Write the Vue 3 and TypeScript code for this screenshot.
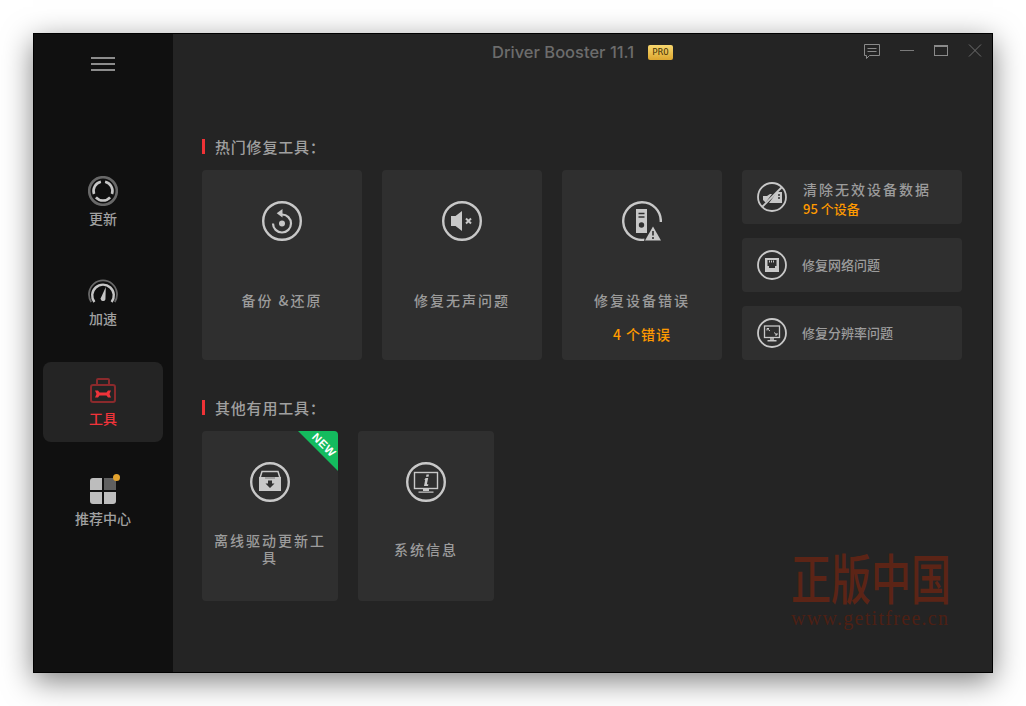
<script setup lang="ts">
const navItems = [
  { key: "update", label: "更新" },
  { key: "speed", label: "加速" },
  { key: "tools", label: "工具" },
  { key: "center", label: "推荐中心" },
]
</script>

<template>
  <div class="page">
    <div class="window">
      <aside class="side">
        <div class="burger"><i></i><i></i><i></i></div>
        <nav class="nav">
          <div v-for="item in navItems" :key="item.key" class="nav-item" :class="{ active: item.key === 'tools' }">
            <svg v-if="item.key === 'update'" class="nav-icon" viewBox="0 0 30 30" fill="none">
              <circle cx="15" cy="15" r="13.8" stroke="#686868" stroke-width="2.600" />
              <path d="M12.900 5.700A9.500 9.500 0 0 0 6 18M17.100 5.700A9.500 9.500 0 0 1 24 18M7.900 21.300A9.500 9.500 0 0 0 22.100 21.300" stroke="#c6c6c6" stroke-width="2.600" />
            </svg>
            <svg v-else-if="item.key === 'speed'" class="nav-icon" viewBox="0 0 30 30" fill="none">
              <path d="M3.200 26A14 14 0 1 1 26.800 26" stroke="#686868" stroke-width="1.800" />
              <path d="M6.400 26A10.800 10.800 0 1 1 23.600 26" stroke="#c6c6c6" stroke-width="2.400" />
              <path d="M17.800 11 17.400 23.500A2.500 2.500 0 0 1 12.600 22.500Z" fill="#c6c6c6" />
            </svg>
            <svg v-else-if="item.key === 'tools'" class="nav-icon" viewBox="0 0 30 30" fill="none">
              <path d="M9 8V4A1 1 0 0 1 10 3H20A1 1 0 0 1 21 4V8" stroke="#8a2a2c" stroke-width="2" />
              <rect x="3" y="9" width="24" height="17" rx="2" stroke="#8a2a2c" stroke-width="2" />
              <path d="M7 14.500H10L11.500 16.500H18.500L20 14.500H23L21.500 18 23 21.500H20L18.500 19.500H11.500L10 21.500H7L8.500 18Z" fill="#f0333a" />
            </svg>
            <svg v-else class="nav-icon" viewBox="0 0 30 30">
              <path d="M5 2H14V14H2V5A3 3 0 0 1 5 2Z" fill="#bdbdbd" />
              <path d="M16 2H25A3 3 0 0 1 28 5V14H16Z" fill="#606060" />
              <path d="M2 16H14V28H5A3 3 0 0 1 2 25Z" fill="#bdbdbd" />
              <path d="M16 16H28V25A3 3 0 0 1 25 28H16Z" fill="#bdbdbd" />
            </svg>
            <span v-if="item.key === 'center'" class="dot"></span>
            <span class="nav-label">{{ item.label }}</span>
          </div>
        </nav>
      </aside>

      <main class="main">
        <header class="titlebar">
          <div class="brand">
            <span class="brand-name">Driver Booster 11.1</span>
            <span class="pro">PRO</span>
          </div>
          <div class="controls">
            <svg width="18" height="18" viewBox="0 0 18 18" fill="none" stroke="#8a8a8a">
              <path d="M1.500 1.500H16.500V12.500H6.500L3.500 15.500V12.500H1.500Z" />
              <path d="M4.500 5.500H13.500M4.500 8.500H13.500" />
            </svg>
            <svg width="16" height="16" viewBox="0 0 16 16" fill="none" stroke="#7a7a7a"><path d="M1 7.500H15" /></svg>
            <svg width="16" height="16" viewBox="0 0 16 16" fill="none" stroke="#8a8a8a"><rect x="1.500" y="2.500" width="13" height="10" /><path d="M1.500 3.500H14.500" /></svg>
            <svg width="16" height="16" viewBox="0 0 16 16" fill="none" stroke="#6e6e6e"><path d="M2 1.500 14 13.500M14 1.500 2 13.500" /></svg>
          </div>
        </header>

        <section class="block first">
          <h2 class="heading">热门修复工具：</h2>
          <div class="hot">
            <div class="card tall">
              <svg class="tool-icon" viewBox="0 0 40 40" fill="none">
                <circle cx="20" cy="20" r="18.800" stroke="#c8c8c8" stroke-width="2.400" />
                <path d="M20 13.500A9 9 0 1 1 11 22.500" stroke="#c8c8c8" stroke-width="2.200" />
                <path d="M20.500 8V16.500L14.700 12.300Z" fill="#c8c8c8" />
                <circle cx="20" cy="22.500" r="3" fill="#c8c8c8" />
              </svg>
              <div class="tool-name">备份 &amp;还原</div>
            </div>
            <div class="card tall">
              <svg class="tool-icon" viewBox="0 0 40 40" fill="none">
                <circle cx="20" cy="20" r="18.800" stroke="#c8c8c8" stroke-width="2.400" />
                <path d="M9 15H13.500L20 10V30L13.500 25H9Z" fill="#c8c8c8" />
                <path d="M24 17.500 29 22.500M29 17.500 24 22.500" stroke="#c8c8c8" stroke-width="2" />
              </svg>
              <div class="tool-name">修复无声问题</div>
            </div>
            <div class="card tall">
              <svg class="tool-icon" viewBox="0 0 40 40" fill="none">
                <path d="M22.500 38.700A18.800 18.800 0 1 1 38.800 21" stroke="#c8c8c8" stroke-width="2.400" />
                <path d="M14 8H25V32H14Z" fill="#c8c8c8" />
                <path d="M16.500 12.500H22.500M16.500 16H22.500" stroke="#2f2f2f" stroke-width="1.500" />
                <circle cx="19.500" cy="24" r="2.700" fill="#2f2f2f" />
                <path d="M31 25.500 39 39.500H23Z" fill="#c8c8c8" stroke="#2f2f2f" stroke-width="1.500" stroke-linejoin="round" paint-order="stroke" />
                <path d="M31 30V34.500M31 36V38" stroke="#2f2f2f" stroke-width="1.600" />
              </svg>
              <div class="tool-name">修复设备错误</div>
              <div class="tool-count">4 个错误</div>
            </div>
            <div class="stack">
              <div class="card wide">
                <svg class="wide-icon" viewBox="0 0 30 30" fill="none">
                  <circle cx="15" cy="15" r="14" stroke="#c8c8c8" stroke-width="1.800" />
                  <path d="M5 25 25 5" stroke="#c8c8c8" stroke-width="1.800" />
                  <path d="M6 14H10L13 12H15L9 20H8L6 18Z" fill="#c8c8c8" />
                  <path d="M12 21 20 10H25V21Z" fill="#c8c8c8" />
                  <path d="M21 13H23M21 16H23" stroke="#2f2f2f" stroke-width="1.300" />
                </svg>
                <div class="wide-text">
                  <div class="wide-title spaced">清除无效设备数据</div>
                  <div class="wide-count">95 个设备</div>
                </div>
              </div>
              <div class="card wide">
                <svg class="wide-icon" viewBox="0 0 30 30" fill="none">
                  <circle cx="15" cy="15" r="14" stroke="#c8c8c8" stroke-width="1.800" />
                  <path d="M8 8H22V22H8Z" fill="#c8c8c8" />
                  <path d="M10.500 10H19.500V16H18V18H12V16H10.500Z" fill="#2f2f2f" />
                  <path d="M12.500 10.500V12.500M14.500 10.500V12.500M16.500 10.500V12.500" stroke="#c8c8c8" />
                </svg>
                <div class="wide-title">修复网络问题</div>
              </div>
              <div class="card wide">
                <svg class="wide-icon" viewBox="0 0 30 30" fill="none">
                  <circle cx="15" cy="15" r="14" stroke="#c8c8c8" stroke-width="1.800" />
                  <rect x="7.500" y="8" width="15" height="11.500" stroke="#c8c8c8" stroke-width="1.300" />
                  <path d="M13 21H17M10.500 22.700H19.500" stroke="#c8c8c8" stroke-width="1.400" />
                  <path d="M10 10.500 13 13M10 10.500V12.500M10 10.500H12M20 17 17 14.500M20 17V15M20 17H18" stroke="#c8c8c8" />
                </svg>
                <div class="wide-title">修复分辨率问题</div>
              </div>
            </div>
          </div>
        </section>

        <section class="block second">
          <h2 class="heading">其他有用工具：</h2>
          <div class="others">
            <div class="card small">
              <div class="ribbon"><span>NEW</span></div>
              <svg class="tool-icon" viewBox="0 0 40 40" fill="none">
                <circle cx="20" cy="20" r="18.800" stroke="#c8c8c8" stroke-width="2.400" />
                <path d="M12 9.500H28L30 16H10Z" stroke="#c8c8c8" stroke-width="1.500" />
                <path d="M9 15H15V17H25V15H31V29H9Z" fill="#c8c8c8" />
                <path d="M18 18.500H22V21.500H24.500L20 26 15.500 21.500H18Z" fill="#2f2f2f" />
              </svg>
              <div class="tool-name two-line">离线驱动更新工具</div>
            </div>
            <div class="card small">
              <svg class="tool-icon" viewBox="0 0 40 40" fill="none">
                <circle cx="20" cy="20" r="18.800" stroke="#c8c8c8" stroke-width="2.400" />
                <rect x="8.500" y="10.500" width="23" height="16" stroke="#c8c8c8" stroke-width="1.400" />
                <path d="M17 27H23V29H17ZM12.500 29.500H27.500V30.800H12.500Z" fill="#c8c8c8" />
                <path d="M20.500 12.500H23L22.500 14.800H20ZM19.700 16H22.200L20.900 22.200 22.400 22.200 22 24H18L19.200 17.800H18.200Z" fill="#c8c8c8" />
              </svg>
              <div class="tool-name">系统信息</div>
            </div>
          </div>
        </section>

        <div class="stamp">
          <div class="stamp-cn">正版中国</div>
          <div class="stamp-url">www.getitfree.cn</div>
        </div>
      </main>
    </div>
  </div>
</template>

<style>
html,
body {
  background: #fff;
}
</style>

<style scoped>
.page {
  width: 1026px;
  height: 706px;
  box-sizing: border-box;
  padding: 33px;
  overflow: hidden;
}

.window {
  display: flex;
  width: 960px;
  height: 640px;
  box-sizing: border-box;
  border: 1px solid #000;
  box-shadow: 0 8px 28px rgba(0, 0, 0, 0.5);
  font-family: "Noto Sans CJK SC", sans-serif;
  background: #242424;
}

.side {
  width: 139px;
  flex: none;
  box-sizing: border-box;
  padding-right: 1px;
  background: #101010;
  display: flex;
  flex-direction: column;
  align-items: center;
}

.burger {
  margin-top: 23px;
  width: 24px;
  display: flex;
  flex-direction: column;
  gap: 4px;
}

.burger i {
  display: block;
  height: 2px;
  background: #8c8c8c;
}

.nav {
  margin-top: 91px;
  display: flex;
  flex-direction: column;
  gap: 20px;
}

.nav-item {
  position: relative;
  width: 120px;
  height: 80px;
  box-sizing: border-box;
  padding-top: 14px;
  border-radius: 8px;
  display: flex;
  flex-direction: column;
  align-items: center;
  color: #a0a0a0;
}

.nav-item.active {
  background: #242424;
  color: #f0333a;
}

.nav-icon {
  width: 30px;
  height: 30px;
  display: block;
}

.nav-label {
  margin-top: 2px;
  font-size: 14px;
  font-weight: 500;
  line-height: 20px;
}

.dot {
  position: absolute;
  top: 12px;
  left: 70px;
  width: 7px;
  height: 7px;
  border-radius: 50%;
  background: #e3a32e;
}

.main {
  position: relative;
  flex: 1;
  min-width: 0;
  padding-left: 29px;
}

.titlebar {
  position: relative;
  height: 36px;
}

.brand {
  position: absolute;
  top: 6px;
  left: 290px;
  display: flex;
  align-items: center;
  gap: 14px;
}

.brand-name {
  font-family: Inter, sans-serif;
  font-size: 16.500px;
  font-weight: 500;
  color: #6c6c6c;
  line-height: 24px;
}

.pro {
  width: 25px;
  height: 15px;
  border-radius: 2px;
  background: linear-gradient(#f8d76f, #dca62f);
  color: #4a3608;
  font-family: "DejaVu Sans Mono", monospace;
  font-size: 9px;
  line-height: 15px;
  text-align: center;
}

.controls {
  position: absolute;
  top: 9px;
  right: 9px;
  display: flex;
  align-items: flex-start;
  gap: 18px;
}

.block.first {
  margin-top: 66px;
}

.block.second {
  margin-top: 37px;
}

.heading {
  margin: 0 0 10px;
  height: 24px;
  padding-left: 13px;
  position: relative;
  font-size: 15px;
  font-weight: 500;
  line-height: 22px;
  letter-spacing: 0.8px;
  color: #a0a0a0;
}

.heading::before {
  content: "";
  position: absolute;
  left: 0;
  top: 3px;
  width: 3px;
  height: 15px;
  background: #ef3236;
}

.hot {
  display: flex;
  gap: 20px;
}

.card {
  position: relative;
  background: #2f2f2f;
  border-radius: 4px;
  box-sizing: border-box;
}

.tall {
  width: 160px;
  height: 190px;
  display: flex;
  flex-direction: column;
  align-items: center;
  padding-top: 31px;
}

.tool-icon {
  width: 40px;
  height: 40px;
  display: block;
  flex: none;
}

.tool-name {
  margin-top: 49px;
  font-size: 14px;
  font-weight: 500;
  line-height: 20px;
  letter-spacing: 2px;
  color: #9c9c9c;
  text-align: center;
}

.tool-count {
  margin-top: 14px;
  font-size: 14px;
  font-weight: 500;
  line-height: 20px;
  letter-spacing: 1px;
  color: #ff9a00;
}

.stack {
  width: 220px;
  display: flex;
  flex-direction: column;
  gap: 14px;
}

.wide {
  height: 54px;
  display: flex;
  align-items: center;
  padding-left: 15px;
  gap: 15px;
}

.wide-icon {
  width: 30px;
  height: 30px;
  flex: none;
}

.wide-text {
  padding-top: 4px;
}

.wide-title {
  font-size: 13px;
  font-weight: 500;
  line-height: 18px;
  color: #9c9c9c;
}

.wide-title.spaced {
  font-size: 14px;
  letter-spacing: 2px;
  line-height: 20px;
  margin-left: 1px;
}

.wide-count {
  font-size: 13px;
  font-weight: 500;
  line-height: 20px;
  color: #ff9a00;
  margin-left: 1px;
}

.others {
  display: flex;
  gap: 20px;
}

.small {
  width: 136px;
  height: 170px;
  display: flex;
  flex-direction: column;
  align-items: center;
  padding-top: 31px;
  overflow: hidden;
}

.small .tool-name {
  margin-top: 37px;
  padding: 0 8px;
}

.small .tool-name.two-line {
  margin-top: 30px;
  line-height: 17px;
}

.ribbon {
  position: absolute;
  top: 0;
  right: 0;
  width: 40px;
  height: 40px;
  background: #14bb5e;
  clip-path: polygon(0 0, 100% 0, 100% 100%);
}

.ribbon span {
  position: absolute;
  top: 8px;
  left: 12px;
  transform: rotate(45deg);
  font-family: "Liberation Sans", sans-serif;
  font-size: 11.500px;
  font-weight: 700;
  letter-spacing: 0.5px;
  line-height: 12px;
  color: #fff;
}

.stamp {
  position: absolute;
  top: 523px;
  left: 618px;
  width: 162px;
  color: #5c2416;
}

.stamp-cn {
  font-size: 40px;
  font-weight: 500;
  line-height: 40px;
  white-space: nowrap;
  transform: scaleY(1.350);
}

.stamp-url {
  margin-top: 11px;
  font-family: "Liberation Serif", serif;
  font-size: 20px;
  line-height: 20px;
  letter-spacing: 1.300px;
  white-space: nowrap;
  color: #4d2014;
}
</style>
